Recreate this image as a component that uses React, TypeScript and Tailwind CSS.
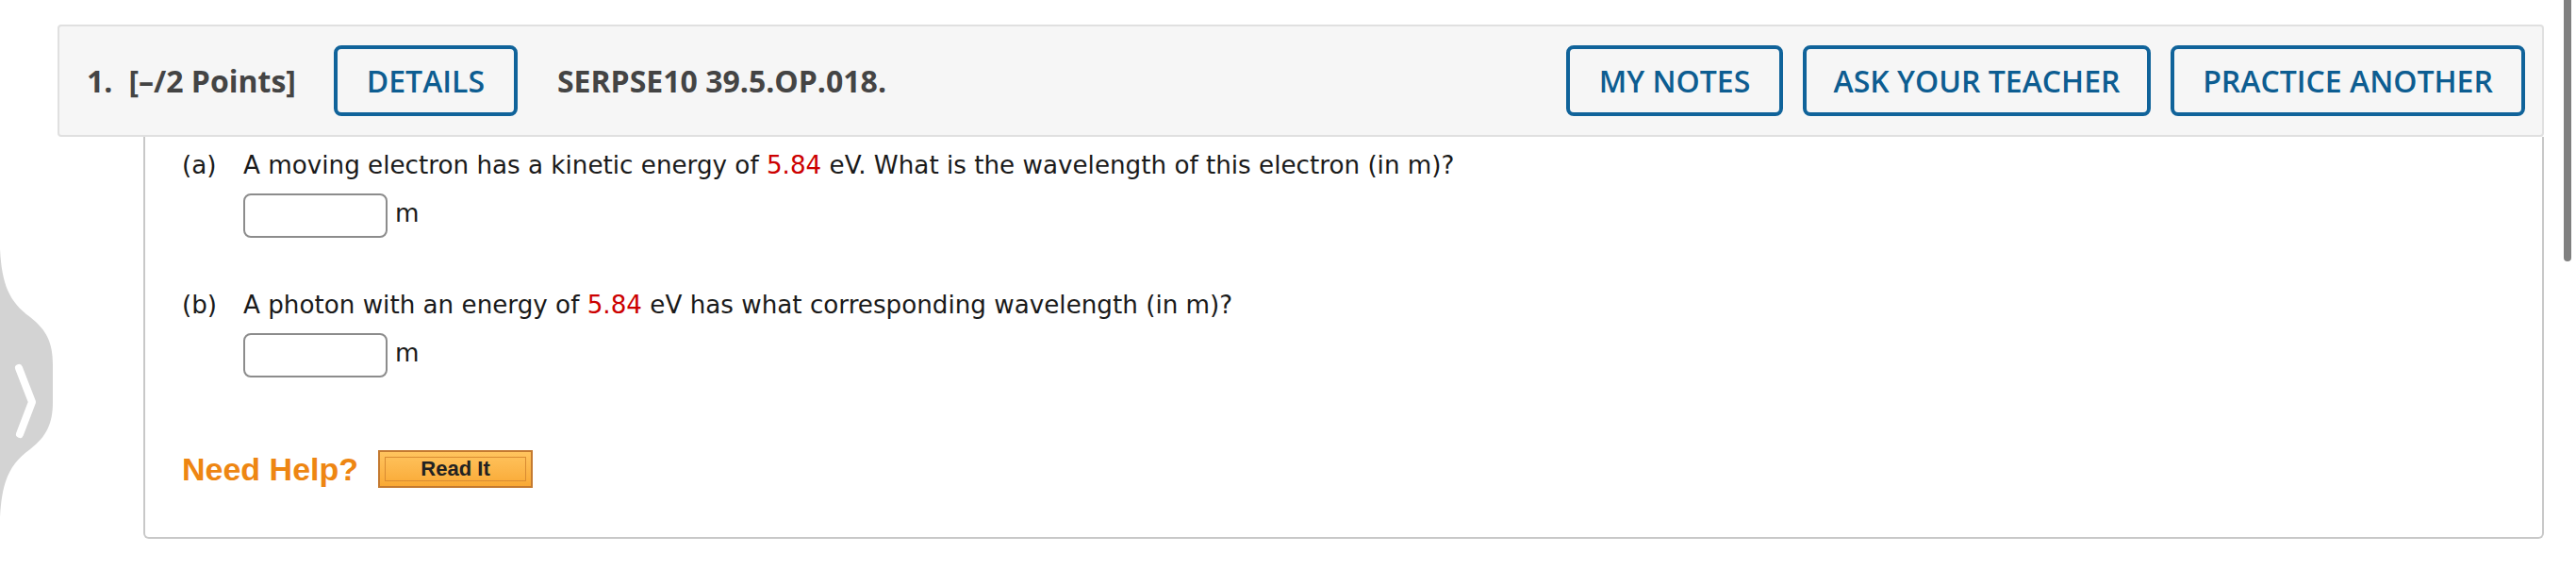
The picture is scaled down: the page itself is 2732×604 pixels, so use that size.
import React from 'react';

const headerFont = { fontFamily: '"Open Sans", "Liberation Sans", sans-serif' };

const ActionButton = ({ label, width }: { label: string; width: string }) => (
  <button
    className={`${width} h-[75px] shrink-0 rounded-[8px] border-[4px] border-[#10639a] bg-[#f6f6f6] text-[32px] font-semibold text-[#0d5d91]`}
  >
    {label}
  </button>
);

const SideTab = () => (
  <svg width="58" height="284" viewBox="0 0 58 284" className="absolute left-0 top-[264px]">
    <path
      d="M0 0 C2 38 10 56 32 72 C50 86 56 100 56 122 L56 162 C56 184 50 198 32 212 C10 228 2 246 0 284 Z"
      fill="#d3d3d3"
    />
    <path d="M20 126 L34 162 L21 196" fill="none" stroke="#ffffff" strokeWidth="8" strokeLinecap="round" strokeLinejoin="round" />
  </svg>
);

const AnswerRow = () => (
  <div className="flex items-center gap-[8px]">
    <div className="h-[47px] w-[153px] rounded-[8px] border-2 border-[#8c8c8c] bg-white" />
    <span className="-mt-[6px]">m</span>
  </div>
);

export default function App() {
  return (
    <div className="relative h-[604px] w-full overflow-hidden bg-white">
      <SideTab />
      <div className="absolute right-[5px] top-0 h-[277px] w-[8px] rounded-b-full bg-[#808080]" />

      <div className="ml-[61px] w-[2637px] pt-[26px]">
        <div
          className="flex h-[119px] items-center rounded-[4px] border-2 border-[#e0e0e0] bg-[#f6f6f6] pl-[29px] pr-[18px] text-[#444]"
          style={headerFont}
        >
          <span className="text-[32px] font-bold">1.</span>
          <span className="ml-[17px] text-[32px] font-bold">[–/2 Points]</span>
          <div className="ml-[40px]">
            <ActionButton label="DETAILS" width="w-[195px]" />
          </div>
          <span className="ml-[42px] text-[32px] font-bold">SERPSE10 39.5.OP.018.</span>
          <div className="ml-auto flex gap-[21px]">
            <ActionButton label="MY NOTES" width="w-[230px]" />
            <ActionButton label="ASK YOUR TEACHER" width="w-[369px]" />
            <ActionButton label="PRACTICE ANOTHER" width="w-[376px]" />
          </div>
        </div>

        <div
          className="ml-[91px] h-[426px] rounded-b-[6px] border-2 border-t-0 border-[#c8c8c8] pl-[39px] pt-[14px] text-[26.2px] leading-[32px] text-[#1a1a1a]"
          style={{ fontFamily: '"DejaVu Sans", Verdana, sans-serif' }}
        >
          <div className="flex">
            <span className="w-[65px] shrink-0">(a)</span>
            <div className="flex flex-col gap-[14px]">
              <p>
                A moving electron has a kinetic energy of <span className="text-[#cc0000]">5.84</span> eV. What is the
                wavelength of this electron (in m)?
              </p>
              <AnswerRow />
            </div>
          </div>

          <div className="mt-[55px] flex">
            <span className="w-[65px] shrink-0">(b)</span>
            <div className="flex flex-col gap-[14px]">
              <p>
                A photon with an energy of <span className="text-[#cc0000]">5.84</span> eV has what corresponding
                wavelength (in m)?
              </p>
              <AnswerRow />
            </div>
          </div>

          <div className="mt-[77px] flex items-center gap-[21px]" style={{ fontFamily: '"Liberation Sans", Arial, sans-serif' }}>
            <span className="text-[34px] font-bold leading-none text-[#ee8612]">Need Help?</span>
            <button className="flex h-[40px] w-[164px] items-center justify-center border-2 border-[#c47a30] bg-gradient-to-b from-[#ffc45e] to-[#f9a934] p-[5px]">
              <span className="flex h-full w-full items-center justify-center border border-[#d98b32] text-[22px] font-bold text-[#222]">
                Read It
              </span>
            </button>
          </div>
        </div>
      </div>
    </div>
  );
}
